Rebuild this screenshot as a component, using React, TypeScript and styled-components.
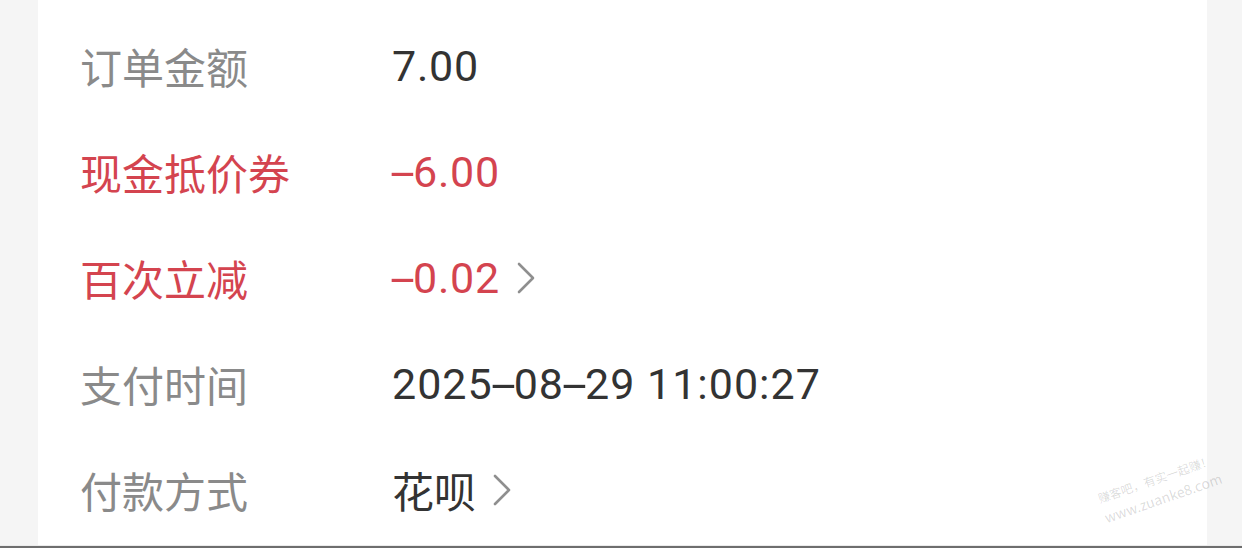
import React from "react";
import styled, { createGlobalStyle } from "styled-components";

const GlobalStyle = createGlobalStyle`
  html, body {
    margin: 0;
    padding: 0;
    background: #f5f5f5;
    overflow: hidden;
  }
  * { box-sizing: border-box; }
`;

const Page = styled.div`
  position: relative;
  width: 1242px;
  height: 548px;
  display: flex;
  flex-direction: column;
  background: #f5f5f5;
`;

const Card = styled.div`
  flex: 1;
  margin-left: 38px;
  width: 1169px;
  background: #ffffff;
  padding: 13px 0 0 42px;
  display: flex;
  flex-direction: column;
`;

const Row = styled.div`
  display: flex;
  align-items: center;
  height: 106px;
`;

const Label = styled.div<{ $red?: boolean }>`
  width: 312px;
  flex: none;
  font-family: "Noto Sans CJK SC", sans-serif;
  font-size: 42px;
  line-height: 1;
  color: ${(p) => (p.$red ? "#d4444f" : "#8a8a8a")};
`;

const Value = styled.div<{ $red?: boolean }>`
  display: flex;
  align-items: center;
  gap: 16px;
  font-family: Roboto, "Noto Sans CJK SC", sans-serif;
  font-size: 43px;
  line-height: 1;
  letter-spacing: 0.8px;
  color: ${(p) => (p.$red ? "#d4444f" : "#333333")};
`;

const Dash = styled.span`
  display: inline-block;
  width: 21px;
  text-align: center;
  letter-spacing: 0;
  transform: scaleX(2.1);
`;

const DateText = styled.span`
  letter-spacing: 1px;
`;

const CjkValue = styled.span`
  font-family: "Noto Sans CJK SC", sans-serif;
  font-size: 42px;
  letter-spacing: 0;
`;

const Divider = styled.div`
  height: 1px;
  background: #ececec;
`;

const BottomBar = styled.div`
  height: 2px;
  background: #6e6e6e;
`;

const Watermark = styled.div`
  position: absolute;
  left: 1096px;
  top: 492px;
  transform: rotate(-19deg);
  transform-origin: left top;
  display: flex;
  flex-direction: column;
  align-items: flex-start;
  gap: 5px;
  color: rgba(0, 0, 0, 0.15);
  font-family: "Noto Sans CJK SC", sans-serif;
  line-height: 1.15;
  pointer-events: none;
`;

const WmLine = styled.span<{ $size: number }>`
  font-size: ${(p) => p.$size}px;
  white-space: nowrap;
`;

const Chevron = () => (
  <svg width="20" height="32" viewBox="0 0 20 32" fill="none">
    <polyline
      points="3,2 17,16 3,30"
      stroke="#8f8f8f"
      strokeWidth="2.6"
      strokeLinecap="round"
      strokeLinejoin="round"
    />
  </svg>
);

export default function App() {
  return (
    <>
      <GlobalStyle />
      <Page>
        <Card>
          <Row>
            <Label>订单金额</Label>
            <Value>7.00</Value>
          </Row>
          <Row>
            <Label $red>现金抵价券</Label>
            <Value $red>
              <span>
                <Dash>-</Dash>6.00
              </span>
            </Value>
          </Row>
          <Row>
            <Label $red>百次立减</Label>
            <Value $red>
              <span>
                <Dash>-</Dash>0.02
              </span>
              <Chevron />
            </Value>
          </Row>
          <Row>
            <Label>支付时间</Label>
            <Value>
              <DateText>
                2025<Dash>-</Dash>08<Dash>-</Dash>29 11:00:27
              </DateText>
            </Value>
          </Row>
          <Row>
            <Label>付款方式</Label>
            <Value>
              <CjkValue>花呗</CjkValue>
              <Chevron />
            </Value>
          </Row>
        </Card>
        <Divider />
        <BottomBar />
        <Watermark>
          <WmLine $size={12}>赚客吧，有实一起赚！</WmLine>
          <WmLine $size={14}>www.zuanke8.com</WmLine>
        </Watermark>
      </Page>
    </>
  );
}
